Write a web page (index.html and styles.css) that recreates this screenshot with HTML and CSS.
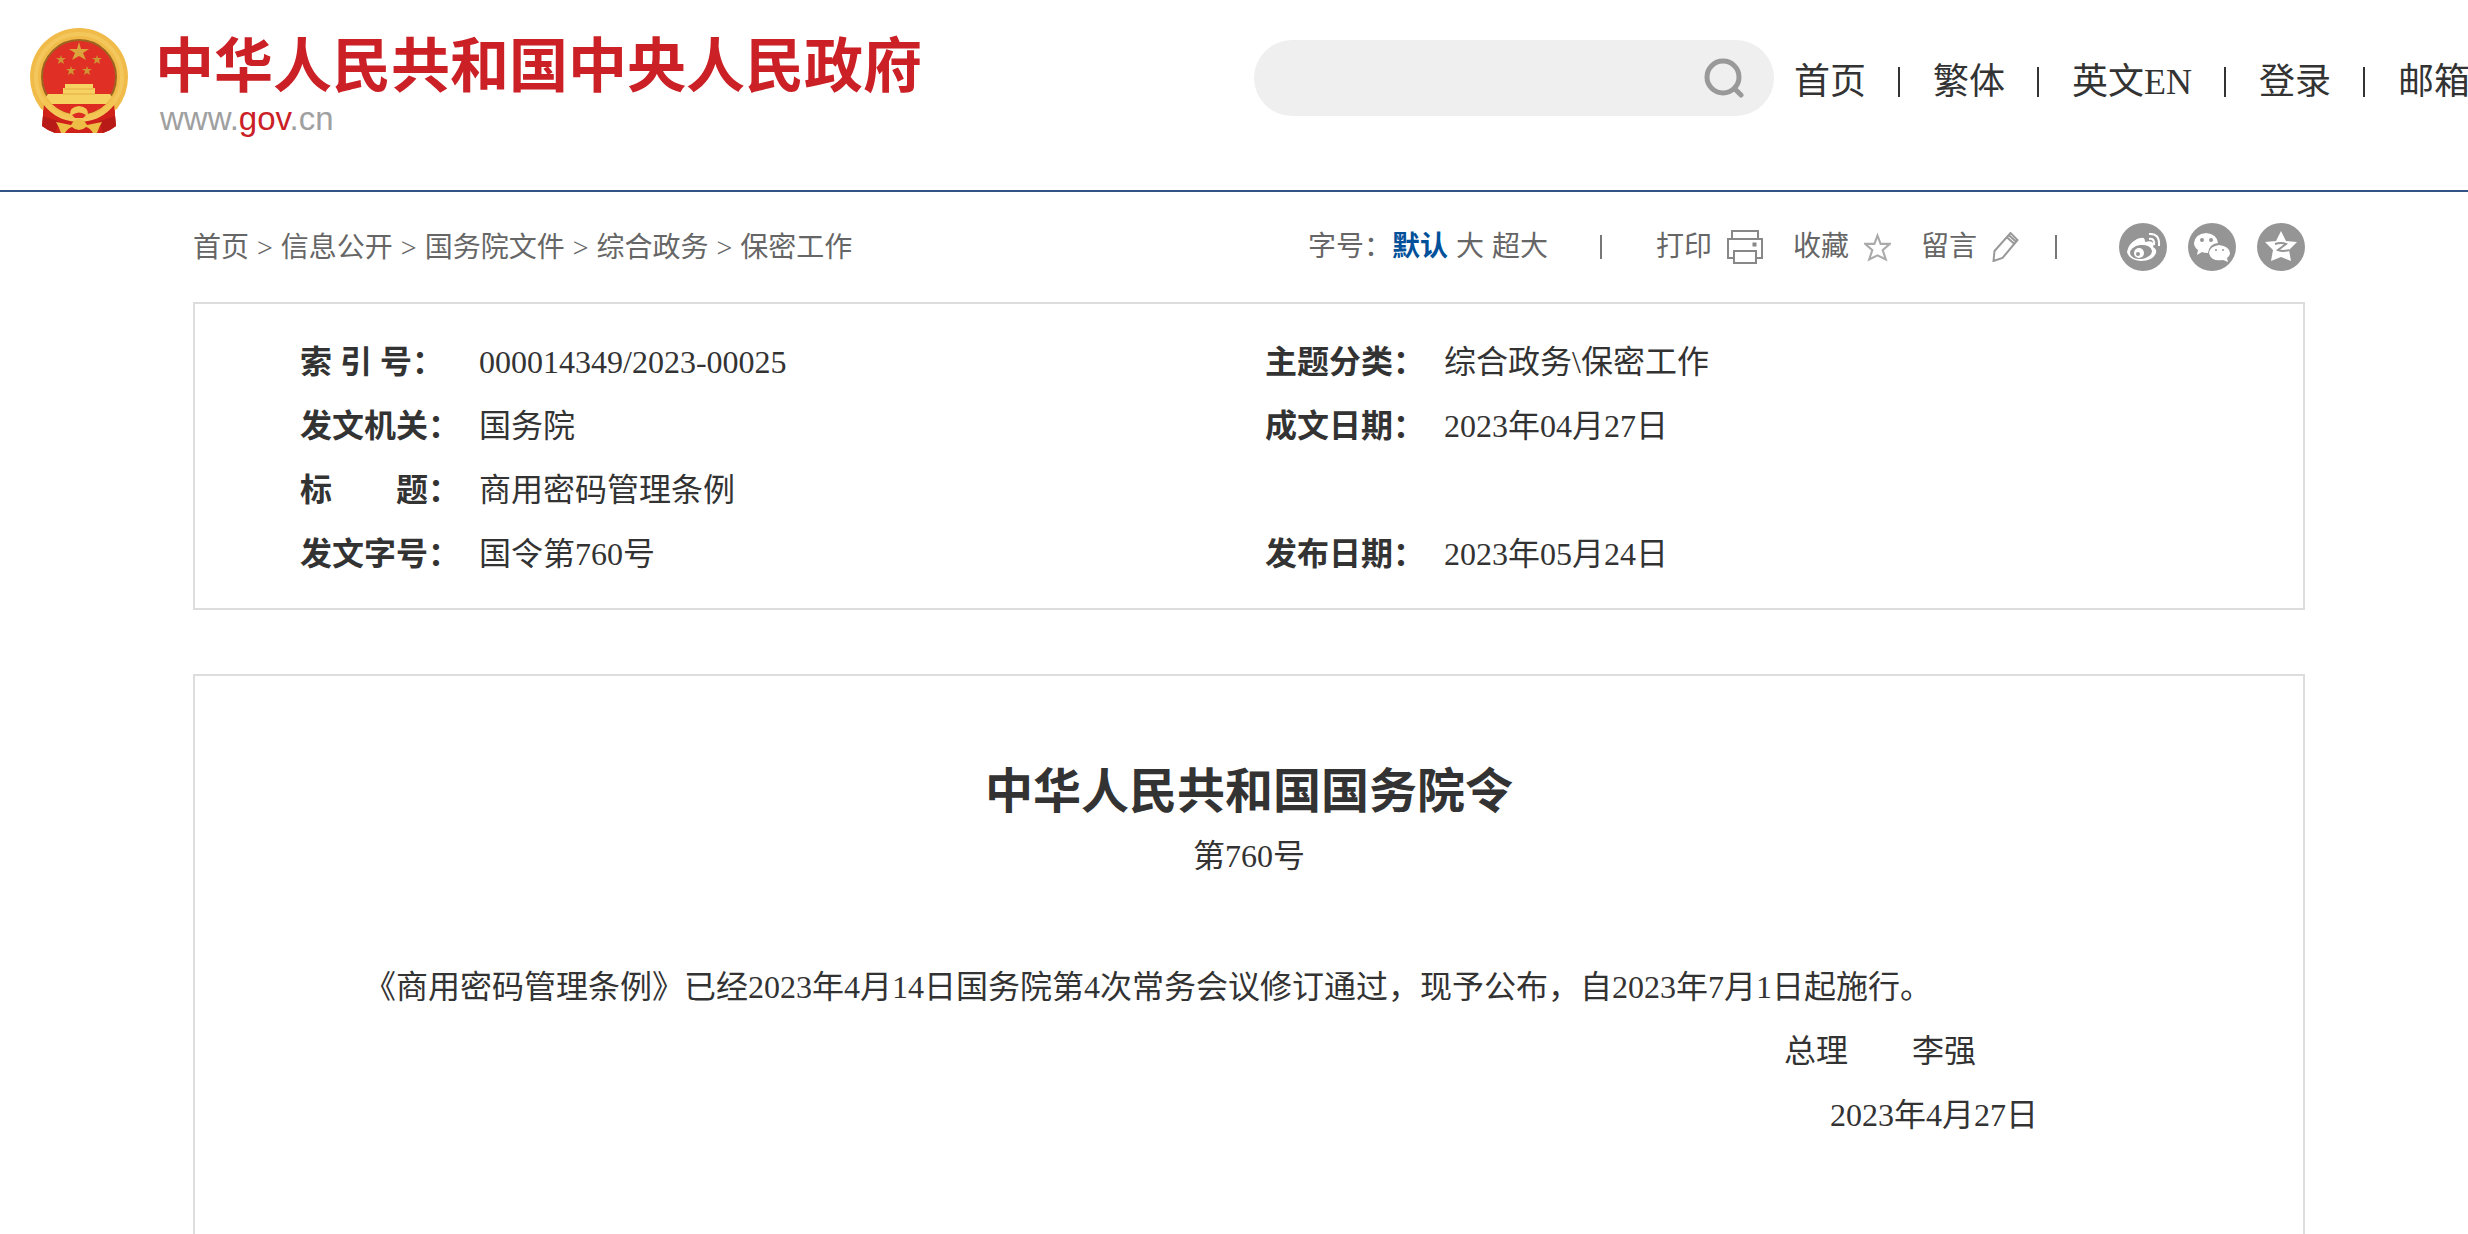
FILE: index.html
```html
<!DOCTYPE html>
<html lang="zh-CN">
<head>
    <meta charset="UTF-8">
    <meta name="viewport" content="width=device-width, initial-scale=1.0">
    <title>商用密码管理条例</title>
    <link rel="stylesheet" href="styles.css">
</head>
<body>
    <header class="header">
        <a class="logo" href="#">
            <svg class="emblem" viewBox="0 0 98 106" aria-hidden="true">
                <path d="M14 76 L12 98 Q19 103 25 105 H73 Q80 103 86 98 L84 76 Z" fill="#cf2019"/>
                <path d="M14 76 L32 86 L25 105 Q18 103 12 98 Z M84 76 L66 86 L73 105 Q80 103 86 98 Z" fill="#b81a17"/>
                <path d="M49 0 A49 49 0 0 1 98 49 Q98 66 87 81 Q68 91 49 91 Q30 91 11 81 Q0 66 0 49 A49 49 0 0 1 49 0 Z" fill="#f0bb48"/>
                <path d="M14 76 L32 86 L49 91 L66 86 L84 76 L85 88 L62 96 H36 L13 88 Z" fill="#cf2019"/>
                <circle cx="49" cy="49" r="43" fill="none" stroke="#f4c75c" stroke-width="4"/>
                <circle cx="49" cy="49" r="37" fill="#e02f25" stroke="#9c6420" stroke-width="2"/>
                <polygon points="49,14 51,21 59,21 53,25 56,32 49,28 42,32 45,25 39,21 47,21" fill="#d9a53c"/>
                <g fill="#cf9433">
                    <polygon points="31,27 32,30 36,30 33,32 34,36 31,34 28,36 29,32 26,30 30,30"/>
                    <polygon points="67,27 68,30 72,30 69,32 70,36 67,34 64,36 65,32 62,30 66,30"/>
                    <polygon points="41,38 42,41 46,41 43,43 44,47 41,45 38,47 39,43 36,41 40,41"/>
                    <polygon points="57,38 58,41 62,41 59,43 60,47 57,45 54,47 55,43 52,41 56,41"/>
                </g>
                <path d="M35 56 H63 V60 H65 V66 H80 L82 69 L76 76 H22 L16 69 L18 66 H33 V60 H35 Z" fill="#f6d263"/>
                <path d="M34 61 H64 M33 66 H65" stroke="#e4ad3e" stroke-width="1"/>
                <path d="M22 76 H76 Q66 86 49 86 Q32 86 22 76 Z" fill="#dd2b22"/>
                <path d="M14 68 Q24 84 40 87 Q39 79 49 78 Q59 79 58 87 Q74 84 84 68 L84 76 Q73 90 49 90 Q25 90 14 76 Z" fill="#f3c553"/>
                <path d="M42 87 Q49 82 56 87 L53 90 H45 Z" fill="#dd2b22"/>
                <path d="M26 94 L41 97 Q44 91 49 91 Q54 91 57 97 L72 94 Q69 99 67 105 H63 Q60 100 56 99 Q53 102 49 102 Q45 102 42 99 Q38 100 35 105 H31 Q29 99 26 94 Z" fill="#edbd45"/>
            </svg>
            <span class="logo-text">
                <span class="logo-name">中华人民共和国中央人民政府</span>
                <span class="logo-url">www.<b>gov</b>.cn</span>
            </span>
        </a>

        <form class="search">
            <input type="text" aria-label="搜索">
            <button type="button" aria-label="搜索">
                <svg viewBox="0 0 40 40" fill="none" stroke="#999" stroke-width="5" stroke-linecap="round">
                    <circle cx="19" cy="19" r="16"/>
                    <path d="M31 31 L37 37"/>
                </svg>
            </button>
        </form>

        <nav class="nav">
            <a href="#">首页</a>
            <a href="#">繁体</a>
            <a href="#">英文EN</a>
            <a href="#">登录</a>
            <a href="#">邮箱</a>
        </nav>
    </header>

    <main class="container">
        <div class="toolbar">
            <nav class="crumbs">
                <a href="#">首页</a> <span>&gt;</span>
                <a href="#">信息公开</a> <span>&gt;</span>
                <a href="#">国务院文件</a> <span>&gt;</span>
                <a href="#">综合政务</a> <span>&gt;</span>
                <a href="#">保密工作</a>
            </nav>
            <div class="tools">
                <div class="font-size">
                    <span>字号：</span>
                    <button class="active">默认</button>
                    <button>大</button>
                    <button>超大</button>
                </div>
                <i class="line"></i>
                <div class="actions">
                    <button>打印
                        <svg class="print" viewBox="0 0 36 34" fill="none" stroke="#888" stroke-width="2">
                            <path d="M5 9 V1 H31 V9"/>
                            <path d="M6 28 H1 V9 H35 V28 H30"/>
                            <path d="M7 21 H29 V33 H7 Z"/>
                            <rect x="26" y="13" width="3" height="3" fill="#888" stroke-width="1"/>
                        </svg>
                    </button>
                    <button>收藏
                        <svg class="small" viewBox="0 0 26 28" fill="none" stroke="#aaa" stroke-width="2">
                            <path d="M13 3 L16 11 L25 11 L18 17 L21 26 L13 22 L5 26 L8 17 L1 11 L10 11 Z"/>
                        </svg>
                    </button>
                    <button>留言
                        <svg class="small" viewBox="0 0 26 30" fill="none" stroke="#999" stroke-width="2">
                            <path d="M1 29 L2 19 L18 1 L25 8 L10 26 Z"/>
                            <path d="M14 5 L22 12 M16 3 L24 10"/>
                        </svg>
                    </button>
                </div>
                <i class="line"></i>
                <div class="share">
                    <a href="#" aria-label="微博">
                        <svg viewBox="0 0 48 48">
                            <circle cx="24" cy="24" r="24" fill="#959595"/>
                            <path d="M22 15 Q26 14 26 19 Q33 17 34 20 Q35 22 34 24 Q38 26 37 30 Q34 38 22 38 Q10 37 8 29 Q9 21 18 16 Q20 15 22 15 Z" fill="#fff"/>
                            <ellipse cx="22" cy="29" rx="11" ry="7" fill="#959595" transform="rotate(-8 22 29)"/>
                            <circle cx="20" cy="30" r="5" fill="#fff"/>
                            <circle cx="19" cy="31" r="2" fill="#959595"/>
                            <path d="M30 11 Q41 10 40 23 M30 16 Q36 15 35 22" fill="none" stroke="#fff" stroke-width="2"/>
                        </svg>
                    </a>
                    <a href="#" aria-label="微信">
                        <svg viewBox="0 0 48 48">
                            <circle cx="24" cy="24" r="24" fill="#959595"/>
                            <path d="M18 10 Q29 11 30 20 Q21 21 20 30 Q16 30 14 29 L9 32 L10 27 Q6 24 6 20 Q7 11 18 10 Z" fill="#fff"/>
                            <path d="M31 22 Q41 23 42 30 Q42 33 39 35 L40 39 L35 37 Q23 39 21 30 Q22 23 31 22 Z" fill="#fff"/>
                            <g fill="#959595">
                                <circle cx="14" cy="17" r="2"/>
                                <circle cx="23" cy="17" r="2"/>
                                <circle cx="28" cy="27" r="1"/>
                                <circle cx="35" cy="27" r="1"/>
                            </g>
                        </svg>
                    </a>
                    <a href="#" aria-label="QQ空间">
                        <svg viewBox="0 0 48 48">
                            <circle cx="24" cy="24" r="24" fill="#959595"/>
                            <path d="M24 8 L29 18 L40 19 L32 27 L34 38 L24 34 L14 38 L16 27 L8 19 L19 18 Z" fill="#fff"/>
                            <path d="M18 21 Q24 19 29 21 L21 27 Q26 29 32 27" fill="none" stroke="#959595" stroke-width="2"/>
                        </svg>
                    </a>
                </div>
            </div>
        </div>

        <section class="info">
            <table>
                <tr>
                    <th scope="row">索 引 号：</th>
                    <td>000014349/2023-00025</td>
                    <th scope="row">主题分类：</th>
                    <td>综合政务\保密工作</td>
                </tr>
                <tr>
                    <th scope="row">发文机关：</th>
                    <td>国务院</td>
                    <th scope="row">成文日期：</th>
                    <td>2023年04月27日</td>
                </tr>
                <tr>
                    <th scope="row">标　　题：</th>
                    <td colspan="3">商用密码管理条例</td>
                </tr>
                <tr>
                    <th scope="row">发文字号：</th>
                    <td>国令第760号</td>
                    <th scope="row">发布日期：</th>
                    <td>2023年05月24日</td>
                </tr>
            </table>
        </section>

        <article class="article">
            <h1>中华人民共和国国务院令</h1>
            <p class="number">第760号</p>
            <p class="text">《商用密码管理条例》已经2023年4月14日国务院第4次常务会议修订通过，现予公布，自2023年7月1日起施行。</p>
            <p class="sign">总理　　李强</p>
            <p class="date">2023年4月27日</p>
        </article>
    </main>
</body>
</html>
```
FILE: styles.css
```css
* {
    box-sizing: border-box;
}
body {
    margin: 0;
    font-family: "Liberation Serif", "Noto Sans CJK SC", serif;
    font-size: 32px;
    line-height: 64px;
    color: #333;
    background-color: #fff;
    overflow-x: hidden;
}
a {
    color: inherit;
    text-decoration: none;
}
button {
    padding: 0;
    border: none;
    background: none;
    font: inherit;
    color: inherit;
    cursor: pointer;
}
svg {
    display: block;
}

/* header */
.header {
    display: flex;
    align-items: flex-start;
    height: 192px;
    padding: 28px 0 0 30px;
    border-bottom: 2px solid #325385;
}
.logo {
    display: flex;
    flex: none;
    gap: 27px;
}
.emblem {
    width: 98px;
    height: 106px;
}
.logo-text {
    display: flex;
    flex-direction: column;
}
.logo-name {
    font-family: "Noto Sans CJK SC", sans-serif;
    font-size: 59px;
    font-weight: bold;
    line-height: 68px;
    color: #ca2026;
}
.logo-url {
    padding-left: 5px;
    font-family: "Liberation Sans", sans-serif;
    font-size: 33px;
    line-height: 46px;
    color: #9fa0a0;
}
.logo-url b {
    font-weight: normal;
    color: #ca2026;
}
.search {
    display: flex;
    flex: none;
    align-items: center;
    width: 520px;
    height: 76px;
    margin: 12px 20px 0 auto;
    padding: 0 30px 0 40px;
    border-radius: 38px;
    background-color: #efefef;
}
.search input {
    flex: 1;
    min-width: 0;
    border: none;
    outline: none;
    background: none;
    font: inherit;
}
.search svg {
    width: 40px;
    height: 40px;
}
.nav {
    display: flex;
    flex: none;
    align-items: center;
    margin: 24px -2px 0 0;
    font-size: 36px;
    line-height: 60px;
    white-space: nowrap;
}
.nav a {
    display: flex;
    align-items: center;
}
.nav a + a::before {
    content: "";
    width: 2px;
    height: 30px;
    margin: 0 33px 0 32px;
    background-color: #333;
}

.container {
    margin: 0 163px 0 193px;
}

/* breadcrumb and tools */
.toolbar {
    display: flex;
    justify-content: space-between;
    align-items: center;
    height: 110px;
    font-size: 28px;
    line-height: 48px;
    color: #666;
    white-space: nowrap;
}
.crumbs,
.tools,
.font-size,
.actions,
.actions button,
.share {
    display: flex;
    align-items: center;
}
.crumbs,
.font-size {
    gap: 8px;
}
.crumbs {
    padding-top: 2px;
}
.font-size span {
    margin-right: -8px;
}
.font-size .active {
    font-weight: bold;
    color: #00509a;
}
.line {
    width: 2px;
    height: 24px;
    margin: 0 54px 0 52px;
    background-color: #777;
}
.actions {
    gap: 30px;
}
.actions button {
    gap: 15px;
}
.actions + .line {
    margin: 0 62px 0 36px;
}
.print {
    width: 36px;
    height: 34px;
}
.small {
    width: 27px;
    height: 30px;
}
.share {
    gap: 21px;
}
.share svg {
    width: 48px;
    height: 48px;
}

/* document info */
.info {
    padding: 26px 73px 22px 105px;
    border: 2px solid #ddd;
}
.info table {
    width: 100%;
    table-layout: fixed;
    border-collapse: collapse;
}
.info th,
.info td {
    padding: 0;
    text-align: left;
}
.info th {
    width: 179px;
}

/* document text */
.article {
    margin-top: 64px;
    padding: 84px 105px 160px;
    border: 2px solid #ddd;
}
.article h1 {
    margin: 0;
    font-size: 48px;
    line-height: 64px;
    text-align: center;
}
.article p {
    margin: 0;
}
.article .number {
    margin-bottom: 67px;
    text-align: center;
}
.article .text {
    text-indent: 64px;
}
.article .sign,
.article .date {
    padding-right: 222px;
    text-align: right;
}
.article .date {
    padding-right: 160px;
}
```
